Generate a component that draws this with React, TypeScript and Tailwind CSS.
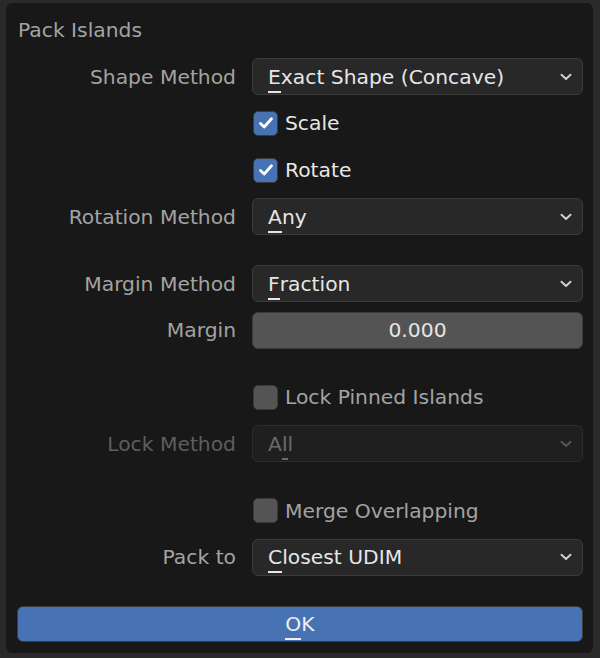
import type { ReactNode } from 'react'

function Key({ children }: { children: string }) {
  return (
    <span className="relative inline-block">
      {children}
      <span className="absolute left-0 right-0 bottom-[-4px] h-[2px] bg-current" />
    </span>
  )
}

function Chevron({ dim = false }: { dim?: boolean }) {
  return (
    <svg width="12" height="8" viewBox="0 0 12 8" className={dim ? 'text-[#555555]' : 'text-[#cfcfcf]'}>
      <path d="M1.5 1.8 L6 6 L10.5 1.8" fill="none" stroke="currentColor" strokeWidth="2" strokeLinecap="round" strokeLinejoin="round" />
    </svg>
  )
}

function Dropdown({ children, disabled = false }: { children: ReactNode; disabled?: boolean }) {
  return (
    <div
      className={`h-[37px] w-full rounded-[6px] border flex items-center justify-between pl-[15px] pr-[10px] ${
        disabled ? 'bg-[#1f1f1f] border-[#2c2c2c] text-[#6a6a6a]' : 'bg-[#282828] border-[#3c3c3c] text-[#e6e6e6]'
      }`}
    >
      <span>{children}</span>
      <Chevron dim={disabled} />
    </div>
  )
}

function Check({ label, checked }: { label: string; checked: boolean }) {
  return (
    <div className="flex items-center gap-[7px] pl-px">
      <div
        className={`w-[25px] h-[25px] rounded-[5px] border flex items-center justify-center ${
          checked ? 'bg-[#4772b3] border-[#3a3a3a]' : 'bg-[#545454] border-[#3a3a3a]'
        }`}
      >
        {checked && (
          <svg width="18" height="18" viewBox="0 0 18 18">
            <path d="M3.5 9.5 L7.2 13 L14.5 4.8" fill="none" stroke="#ffffff" strokeWidth="2.8" strokeLinecap="round" strokeLinejoin="round" />
          </svg>
        )}
      </div>
      <span className={checked ? 'text-[#e6e6e6]' : 'text-[#a3a3a3]'}>{label}</span>
    </div>
  )
}

function Row({ label, children, dim = false }: { label?: string; children: ReactNode; dim?: boolean }) {
  return (
    <div className="h-[46.75px] grid grid-cols-[218px_1fr] gap-x-[16px] items-center">
      <div className={`text-right ${dim ? 'text-[#5e5e5e]' : 'text-[#a3a3a3]'}`}>{label}</div>
      <div>{children}</div>
    </div>
  )
}

function Sep() {
  return <div className="h-[20px]" />
}

export default function App() {
  return (
    <div className="w-[600px] h-[658px] bg-[#2a2a2a] pt-[3px] pl-[6px] pr-[7px] pb-[5px] font-['DejaVu_Sans',sans-serif] text-[20.3px] leading-[24px]">
      <div className="h-full rounded-[6px] bg-[#181818] pl-[12px] pr-[10px]">
        <div className="pt-[15px] mb-[11.125px] text-[#a3a3a3]">Pack Islands</div>

        <Row label="Shape Method">
          <Dropdown>
            <Key>E</Key>xact Shape (Concave)
          </Dropdown>
        </Row>
        <Row>
          <Check label="Scale" checked />
        </Row>
        <Row>
          <Check label="Rotate" checked />
        </Row>
        <Row label="Rotation Method">
          <Dropdown>
            <Key>A</Key>ny
          </Dropdown>
        </Row>
        <Sep />
        <Row label="Margin Method">
          <Dropdown>
            <Key>F</Key>raction
          </Dropdown>
        </Row>
        <Row label="Margin">
          <div className="h-[37px] w-full rounded-[6px] border border-[#3c3c3c] bg-[#545454] flex items-center justify-center text-[#e6e6e6]">
            0.000
          </div>
        </Row>
        <Sep />
        <Row>
          <Check label="Lock Pinned Islands" checked={false} />
        </Row>
        <Row label="Lock Method" dim>
          <Dropdown disabled>
            A<Key>l</Key>l
          </Dropdown>
        </Row>
        <Sep />
        <Row>
          <Check label="Merge Overlapping" checked={false} />
        </Row>
        <Row label="Pack to">
          <Dropdown>
            <Key>C</Key>losest UDIM
          </Dropdown>
        </Row>
        <Sep />
        <div className="h-[46.75px] flex items-center -ml-px">
          <div className="h-[36px] w-full rounded-[6px] border border-[#3a3a3a] bg-[#4772b3] flex items-center justify-center text-[#f0f0f0]">
            <span>
              <Key>O</Key>K
            </span>
          </div>
        </div>
      </div>
    </div>
  )
}
